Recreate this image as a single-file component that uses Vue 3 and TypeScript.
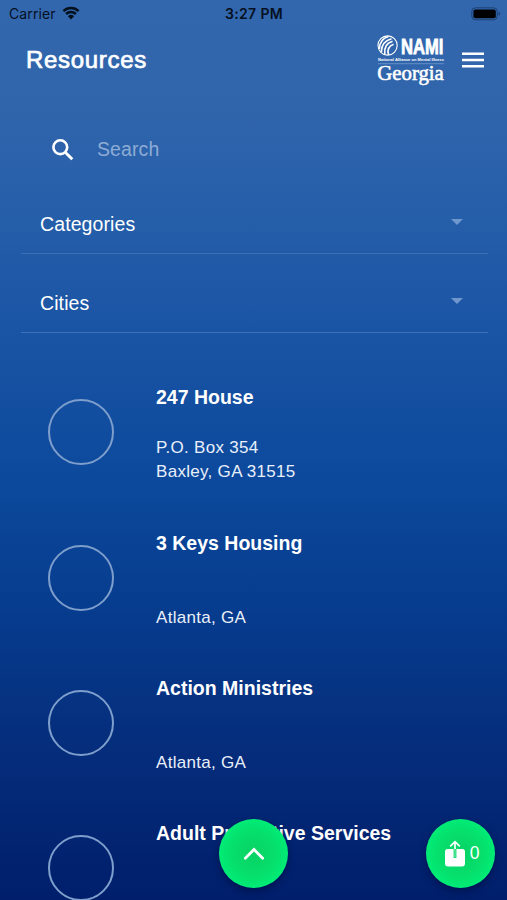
<script setup lang="ts">
interface Resource {
  name: string
  street: string
  city: string
}

const filters: string[] = ['Categories', 'Cities']

const resources: Resource[] = [
  { name: '247 House', street: 'P.O. Box 354', city: 'Baxley, GA 31515' },
  { name: '3 Keys Housing', street: '', city: 'Atlanta, GA' },
  { name: 'Action Ministries', street: '', city: 'Atlanta, GA' },
  { name: 'Adult Protective Services', street: '', city: '' },
]

const shareCount = 0
</script>

<template>
  <div class="screen">
    <div class="status">
      <div class="carrier">
        <span>Carrier</span>
        <svg class="wifi" width="18" height="14" viewBox="0 0 18 14">
          <path d="M1.4 5.1a11 11 0 0 1 15.2 0M4.1 8a7.1 7.1 0 0 1 9.8 0" fill="none" stroke="#05101f" stroke-width="2.5" />
          <path d="M9 13.4 5.9 10.2a4.5 4.5 0 0 1 6.2 0z" fill="#05101f" />
        </svg>
      </div>
      <span class="time">3:27 PM</span>
      <svg class="battery" width="30" height="14" viewBox="0 0 30 14">
        <rect x=".8" y=".8" width="25.4" height="12" rx="3.6" fill="none" stroke="#1d4172" />
        <rect x="2.4" y="2.4" width="22.4" height="8.8" rx="2" fill="#000" />
        <path d="M27.5 4.8q1.7.6 1.7 2t-1.7 2z" fill="#1d4172" />
      </svg>
    </div>

    <header class="header">
      <h1>Resources</h1>
      <svg class="logo" width="68" height="52" viewBox="0 0 68 52">
        <circle cx="10.6" cy="10.5" r="9.6" fill="none" stroke="#fff" stroke-width="1.1" />
        <path d="M2.300 14C2.600 7.500 6 3 11.500 1.500M4.300 17C4.400 10.500 7.500 5.500 14.500 3.700M7.900 19C7 13 9.500 8 15.500 6.200M11.800 19.800C9.800 15.500 11.500 11 16.500 9.200" fill="none" stroke="#fff" stroke-width="1.7" />
        <text class="brand" x="24" y="19.200" textLength="42.500" lengthAdjust="spacingAndGlyphs">NAMI</text>
        <text class="tagline" x="1" y="26" textLength="66" lengthAdjust="spacingAndGlyphs">National Alliance on Mental Illness</text>
        <path d="M1 28.700h66" stroke="#7ca0d0" stroke-width=".7" />
        <text class="state" x=".3" y="45.300" textLength="66.500" lengthAdjust="spacingAndGlyphs">Georgia</text>
      </svg>
      <svg class="menu" width="22" height="16" viewBox="0 0 22 16">
        <path d="M0 1.700h22M0 8h22M0 14.300h22" stroke="#fff" stroke-width="2.500" />
      </svg>
    </header>

    <div class="search">
      <svg width="22" height="22" viewBox="0 0 22 22" fill="none" stroke="#fff">
        <circle cx="8.300" cy="8.200" r="6.900" stroke-width="2.600" />
        <path d="m13.200 13.200 7.100 7" stroke-width="3" />
      </svg>
      <span>Search</span>
    </div>

    <div v-for="filter in filters" :key="filter" class="filter">
      <span>{{ filter }}</span>
      <i class="caret"></i>
    </div>

    <div class="list">
      <article v-for="item in resources" :key="item.name" class="item">
        <div class="ring"></div>
        <div class="info">
          <h2>{{ item.name }}</h2>
          <p>{{ item.street }}</p>
          <p>{{ item.city }}</p>
        </div>
      </article>
    </div>

    <button class="fab up" aria-label="Back to top">
      <svg width="22" height="14" viewBox="0 0 22 14">
        <path d="m2.300 11.200 8.700-8.700 8.700 8.700" fill="none" stroke="#fff" stroke-width="2.700" stroke-linecap="round" />
      </svg>
    </button>
    <button class="fab share" aria-label="Share">
      <svg width="22" height="28" viewBox="0 0 22 28">
        <path d="M3.500 9H9.600v9h2.800V9h6.100Q21 9 21 11.500v12Q21 26.500 18 26.500H4Q1 26.500 1 23.500v-12Q1 9 3.500 9z" fill="#fff" />
        <path d="M11 9V2M6.200 6.300 11 1.700l4.800 4.600" fill="none" stroke="#fff" stroke-width="1.700" />
        <path d="M11 9v8.500" stroke="#7df0b0" stroke-width="1" />
      </svg>
      <span>{{ shareCount }}</span>
    </button>
  </div>
</template>

<style>
body {
  margin: 0;
  overflow: hidden;
}
</style>

<style scoped>
.screen {
  position: relative;
  box-sizing: border-box;
  width: 507px;
  height: 900px;
  overflow: hidden;
  color: #fff;
  font-family: "Liberation Sans", Arial, sans-serif;
  background: linear-gradient(180deg, #3267ae 0, #3065ac 110px, #255ea9 220px, #1953a4 340px, #0c499c 480px, #073d8f 600px, #052d7b 750px, #001e6b 900px);
}
.status {
  display: grid;
  grid-template-columns: 1fr auto 1fr;
  align-items: center;
  height: 28px;
  padding: 0 6px 0 9px;
  box-sizing: border-box;
  color: #05101f;
  font-family: Inter, sans-serif;
  font-size: 14px;
}
.carrier {
  display: flex;
  align-items: center;
  gap: 6px;
}
.carrier span {
  margin-top: -1px;
  letter-spacing: .1px;
}
.wifi {
  margin-top: -2px;
}
.time {
  margin: -1px 0 0 -2px;
  font-weight: 600;
  font-size: 14px;
  letter-spacing: .35px;
}
.battery {
  justify-self: end;
  margin-top: -1px;
}
.header {
  display: flex;
  align-items: center;
  height: 64px;
  padding: 0 23px 0 26px;
}
h1 {
  flex: 1;
  margin: 0;
  font-size: 24px;
  font-weight: 400;
  line-height: 30px;
  letter-spacing: .7px;
  -webkit-text-stroke: .7px #fff;
}
.logo {
  overflow: visible;
  margin: 1px 17px 0 0;
}
.brand {
  fill: #fff;
  stroke: #fff;
  stroke-width: .8px;
  font: 700 22.500px "Liberation Sans", sans-serif;
}
.tagline {
  fill: #fff;
  font: 700 4px "Liberation Sans", sans-serif;
}
.state {
  fill: #fff;
  stroke: #fff;
  stroke-width: .55px;
  font: 400 20px "Liberation Serif", serif;
}
.menu {
  margin-top: -1px;
}
.search {
  display: flex;
  align-items: center;
  gap: 23px;
  height: 24px;
  margin: 45px 0 0 52px;
  color: #8eacd5;
  font-size: 19.500px;
  letter-spacing: .1px;
}
.search svg {
  margin-top: 1px;
}
.filter {
  display: flex;
  align-items: center;
  justify-content: space-between;
  box-sizing: border-box;
  height: 59px;
  margin: 34px 19px 0 21px;
  padding: 0 25px 0 19px;
  border-bottom: 1.500px solid #3b70b6;
  font-size: 19.500px;
  letter-spacing: .1px;
}
.filter + .filter {
  margin-top: 20px;
}
.caret {
  margin-bottom: 4px;
  border: 6px solid transparent;
  border-top-color: #6f96cd;
  border-bottom: 0;
}
.list {
  margin: 51px 0 0 48px;
}
.item {
  display: flex;
  gap: 42px;
  height: 145.300px;
}
.ring {
  flex: none;
  box-sizing: border-box;
  width: 66px;
  height: 66px;
  margin-top: 15.300px;
  border: 2px solid #7e9ecc;
  border-radius: 50%;
}
h2 {
  margin: .3px 0 26px;
  font-size: 19.500px;
  font-weight: 700;
  line-height: 26px;
}
.info p {
  height: 24px;
  margin: 0;
  color: #e9f0fa;
  font-size: 17px;
  line-height: 24px;
  letter-spacing: .3px;
}
.fab {
  position: absolute;
  top: 819px;
  display: flex;
  align-items: center;
  justify-content: center;
  width: 69px;
  height: 69px;
  padding: 0;
  border: 0;
  border-radius: 50%;
  color: #fff;
  background: radial-gradient(circle, #08d265 0, #06df6b 45%, #00ec76 70%);
  box-shadow: 0 3px 7px rgba(0, 8, 50, .5);
}
.up {
  left: 219px;
}
.share {
  left: 426px;
  gap: 4px;
  padding-left: 2px;
  font: 17.500px "Liberation Sans", sans-serif;
}
</style>
